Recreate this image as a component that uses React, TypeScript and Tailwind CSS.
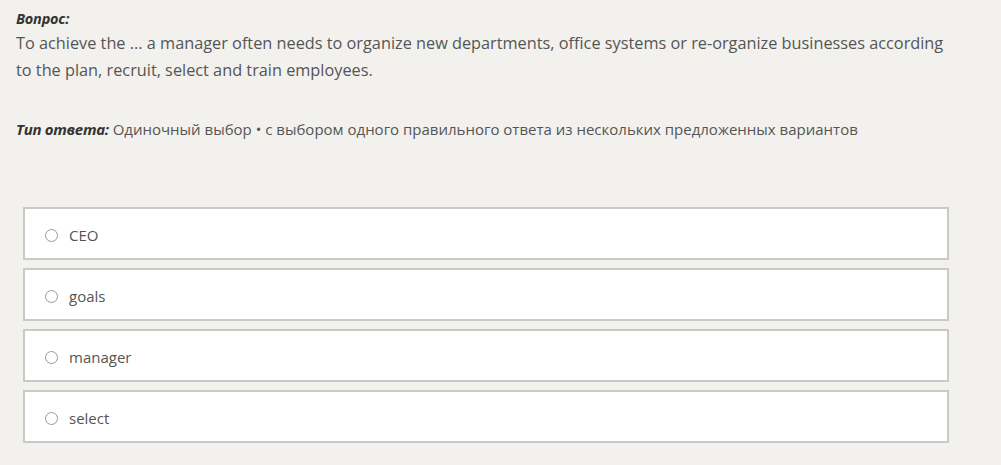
const options = ['CEO', 'goals', 'manager', 'select']

export default function App() {
  return (
    <div
      className="w-[1001px] h-[465px] bg-[#f2f1ee] text-[#555] overflow-hidden"
      style={{ fontFamily: '"Open Sans", "Noto Sans", sans-serif' }}
    >
      <div className="pl-4 pt-[10px]">
        <div className="text-[14.5px] italic font-bold text-[#333] leading-[18px] tracking-[-0.2px]">Вопрос:</div>
        <p className="text-[16.3px] leading-[27px] mt-[2px] whitespace-nowrap">
          To achieve the ... a manager often needs to organize new departments, office systems or re-organize businesses according
          <br />
          to the plan, recruit, select and train employees.
        </p>
        <div className="mt-[35px] text-[15px] leading-[20px]">
          <span className="italic font-bold text-[#333] tracking-[-0.3px]">Тип ответа:</span> Одиночный выбор • с выбором одного правильного ответа из нескольких предложенных вариантов
        </div>
      </div>

      <div className="ml-[23px] mt-[68px] w-[926px] flex flex-col gap-[8px]">
        {options.map((o) => (
          <label
            key={o}
            className="h-[53px] bg-white border-2 border-[#c9c9c7] flex items-center pl-[20px] pt-[3px] gap-[11px] text-[15px]"
          >
            <span className="w-[13px] h-[13px] rounded-full border border-[#999] bg-white" />
            <span>{o}</span>
          </label>
        ))}
      </div>
    </div>
  )
}
